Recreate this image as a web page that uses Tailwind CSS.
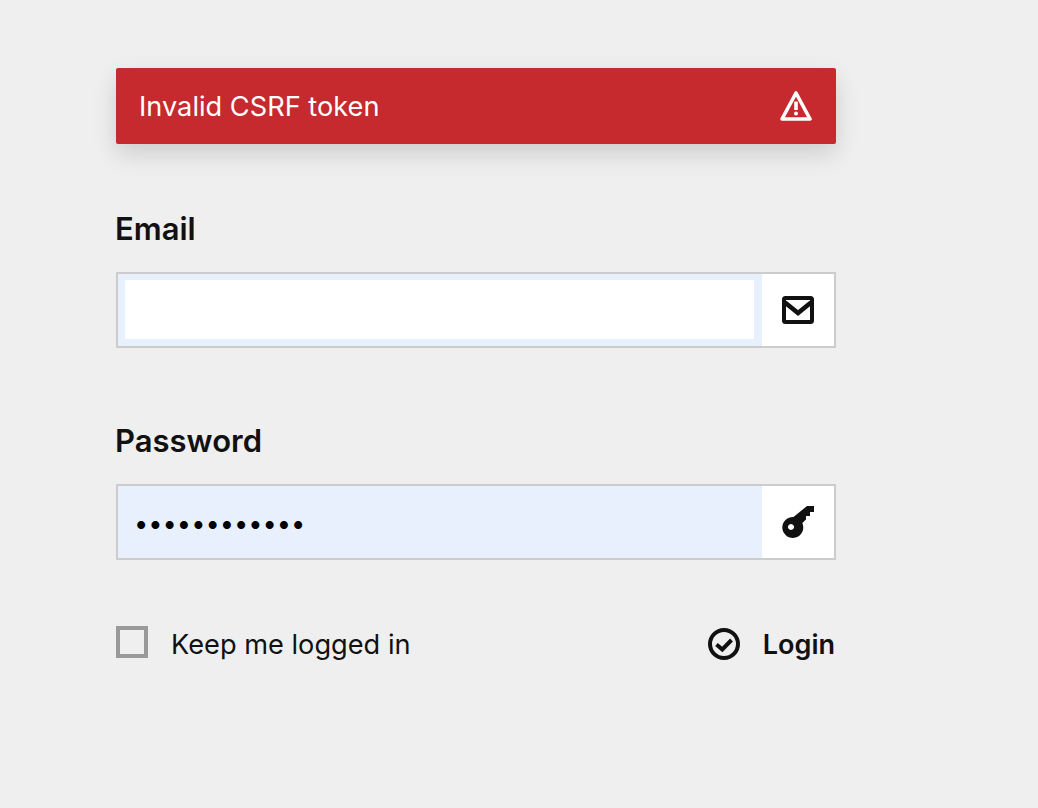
<!DOCTYPE html>
<html lang="en">
<head>
    <meta charset="UTF-8">
    <meta name="viewport" content="width=device-width, initial-scale=1.0">
    <title>Login</title>
    <script src="https://cdn.jsdelivr.net/npm/@tailwindcss/browser@4"></script>
</head>
<body class="bg-[#efefef] text-[#111111] font-['Inter',sans-serif] min-h-screen">
    <form class="w-[720px] ml-[116px] pt-[68px]">
        <div class="flex items-center justify-between h-[76px] pl-[23px] pr-[24px] bg-[#c6292e] text-white text-[27.2px] rounded-[2px] shadow-[0_10px_24px_rgba(0,0,0,0.14)]">
            <span class="pt-[2px]">Invalid CSRF token</span>
            <svg class="w-[32px] h-[32px]" viewBox="0 0 32 32" fill="none">
                <path d="M16 3 L30 29 H2 Z" stroke="#fff" stroke-width="3.6" stroke-linejoin="round"/>
                <rect x="14.2" y="11.5" width="3.6" height="8.5" rx="0.6" fill="#fff"/>
                <circle cx="16" cy="23.6" r="2" fill="#fff"/>
            </svg>
        </div>

        <label class="block -ml-px mt-[66px] mb-[24px] text-[31px] leading-[38px] font-semibold">Email</label>
        <div class="flex h-[76px] border-2 border-[#cccccc]">
            <div class="flex-1 bg-[#e8f0fe] pt-[6px] pb-[7px] pl-[7px] pr-[8px]">
                <input type="email" class="block w-full h-full bg-white outline-none">
            </div>
            <div class="w-[72px] bg-white flex items-center justify-center">
                <svg class="w-[32px] h-[28px]" viewBox="0 0 32 28" fill="none">
                    <rect x="2" y="2" width="28" height="24" rx="1.5" stroke="#111" stroke-width="4"/>
                    <path d="M3 6.5 L16 17 L29 6.5" stroke="#111" stroke-width="4.6"/>
                </svg>
            </div>
        </div>

        <label class="block -ml-px mt-[74px] mb-[24px] text-[31px] leading-[38px] font-semibold">Password</label>
        <div class="flex h-[76px] border-2 border-[#cccccc]">
            <input type="password" value="passwordpass" class="flex-1 min-w-0 bg-[#e8f0fe] pl-[16px] pt-[3px] text-[25.4px] text-black outline-none">
            <div class="w-[72px] bg-white flex items-center justify-center">
                <svg class="w-[32px] h-[32px]" viewBox="0 0 32 32">
                    <path fill="#111" fill-rule="evenodd" d="M25 0 H32 V6 H28 V10 H24 V13.5 L20.3 17 A10.5 10.5 0 1 1 11.5 11 Z M9 18 a3 3 0 1 0 0.01 0 Z"/>
                </svg>
            </div>
        </div>

        <div class="flex items-center justify-between mt-[66px] h-[32px]">
            <label class="flex items-center gap-[23px] text-[27.2px]">
                <span class="w-[32px] h-[32px] border-[4px] border-[#999999]"></span>
                <span class="pt-[6px]">Keep me logged in</span>
            </label>
            <button type="button" class="flex items-center gap-[23px] pr-[1px] text-[27px] font-semibold">
                <svg class="w-[32px] h-[32px] mt-[4px]" viewBox="0 0 32 32" fill="none">
                    <circle cx="16" cy="16" r="14" stroke="#111" stroke-width="4"/>
                    <path d="M8.5 16.5 L14.3 21.5 L23.5 12" stroke="#111" stroke-width="4"/>
                </svg>
                <span class="pt-[6px]">Login</span>
            </button>
        </div>
    </form>
</body>
</html>
